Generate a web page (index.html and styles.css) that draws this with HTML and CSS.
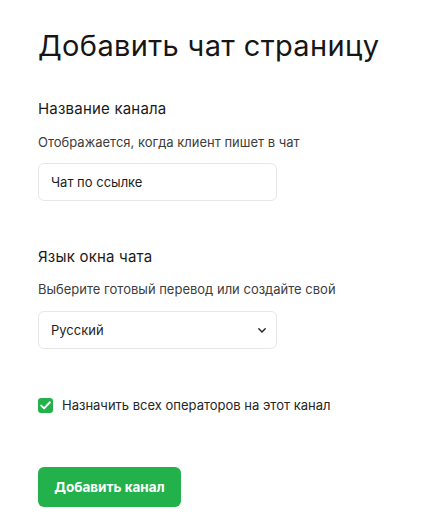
FILE: index.html
```html
<!DOCTYPE html>
<html lang="ru">
<head>
<meta charset="utf-8">
<title>Добавить чат страницу</title>
<link rel="stylesheet" href="styles.css">
</head>
<body>
<main class="page">
  <h1 class="title">Добавить чат страницу</h1>

  <section class="field field-first">
    <div class="label">Название канала</div>
    <div class="hint">Отображается, когда клиент пишет в чат</div>
    <div class="input">Чат по ссылке</div>
  </section>

  <section class="field field-second">
    <div class="label">Язык окна чата</div>
    <div class="hint">Выберите готовый перевод или создайте свой</div>
    <div class="input select">
      <span>Русский</span>
      <svg class="chevron" width="8" height="5" viewBox="0 0 8 5"><path d="M0.8 0.8 L4 4 L7.2 0.8" fill="none" stroke="#222" stroke-width="1.4" stroke-linecap="round" stroke-linejoin="round"/></svg>
    </div>
  </section>

  <label class="check-row">
    <span class="checkbox">
      <svg width="11" height="9" viewBox="0 0 11 9"><path d="M1.2 4.6 L4.1 7.4 L9.8 1.4" fill="none" stroke="#fff" stroke-width="2" stroke-linecap="round" stroke-linejoin="round"/></svg>
    </span>
    <span class="check-text">Назначить всех операторов на этот канал</span>
  </label>

  <button class="btn" type="button">Добавить канал</button>
</main>
</body>
</html>
```

FILE: styles.css
```css
html, body {
  margin: 0;
  padding: 0;
  background: #ffffff;
}

body {
  font-family: Inter, "Noto Sans", "Liberation Sans", sans-serif;
  color: #1c1c1c;
}

.page {
  padding: 28px 0 0 38px;
  display: flex;
  flex-direction: column;
  align-items: flex-start;
}

.title {
  margin: 0;
  font-size: 29px;
  line-height: 35px;
  font-weight: 400;
  letter-spacing: 0.35px;
  color: #161616;
}

.field {
  display: flex;
  flex-direction: column;
  align-items: flex-start;
}

.field-first {
  margin-top: 37px;
}

.field-second {
  margin-top: 47px;
}

.label {
  font-size: 15px;
  line-height: 18px;
  font-weight: 400;
  letter-spacing: 0.2px;
  color: #1a1a1a;
}

.hint {
  margin-top: 16px;
  font-size: 13px;
  line-height: 16px;
  color: #3d3d3d;
}

.input {
  margin-top: 13px;
  box-sizing: border-box;
  width: 239px;
  height: 38px;
  border: 1px solid #e7e7e7;
  border-radius: 6px;
  padding: 0 12px;
  display: flex;
  align-items: center;
  font-size: 13px;
  color: #1e1e1e;
}

.field-second .hint {
  margin-top: 15px;
}

.select {
  margin-top: 14px;
  justify-content: space-between;
  padding-right: 10px;
}

.chevron {
  display: block;
}

.check-row {
  margin-top: 48px;
  display: flex;
  align-items: center;
  gap: 9px;
}

.checkbox {
  width: 15px;
  height: 15px;
  border-radius: 3px;
  background: #23b14b;
  display: flex;
  align-items: center;
  justify-content: center;
}

.check-text {
  font-size: 13px;
  line-height: 16px;
  color: #262626;
}

.btn {
  margin-top: 54px;
  width: 143px;
  height: 40px;
  border: none;
  border-radius: 6px;
  background: #23b14b;
  color: #ffffff;
  font-family: Inter, "Noto Sans", "Liberation Sans", sans-serif;
  font-size: 13.5px;
  font-weight: 700;
  padding: 0;
  cursor: pointer;
}
```
